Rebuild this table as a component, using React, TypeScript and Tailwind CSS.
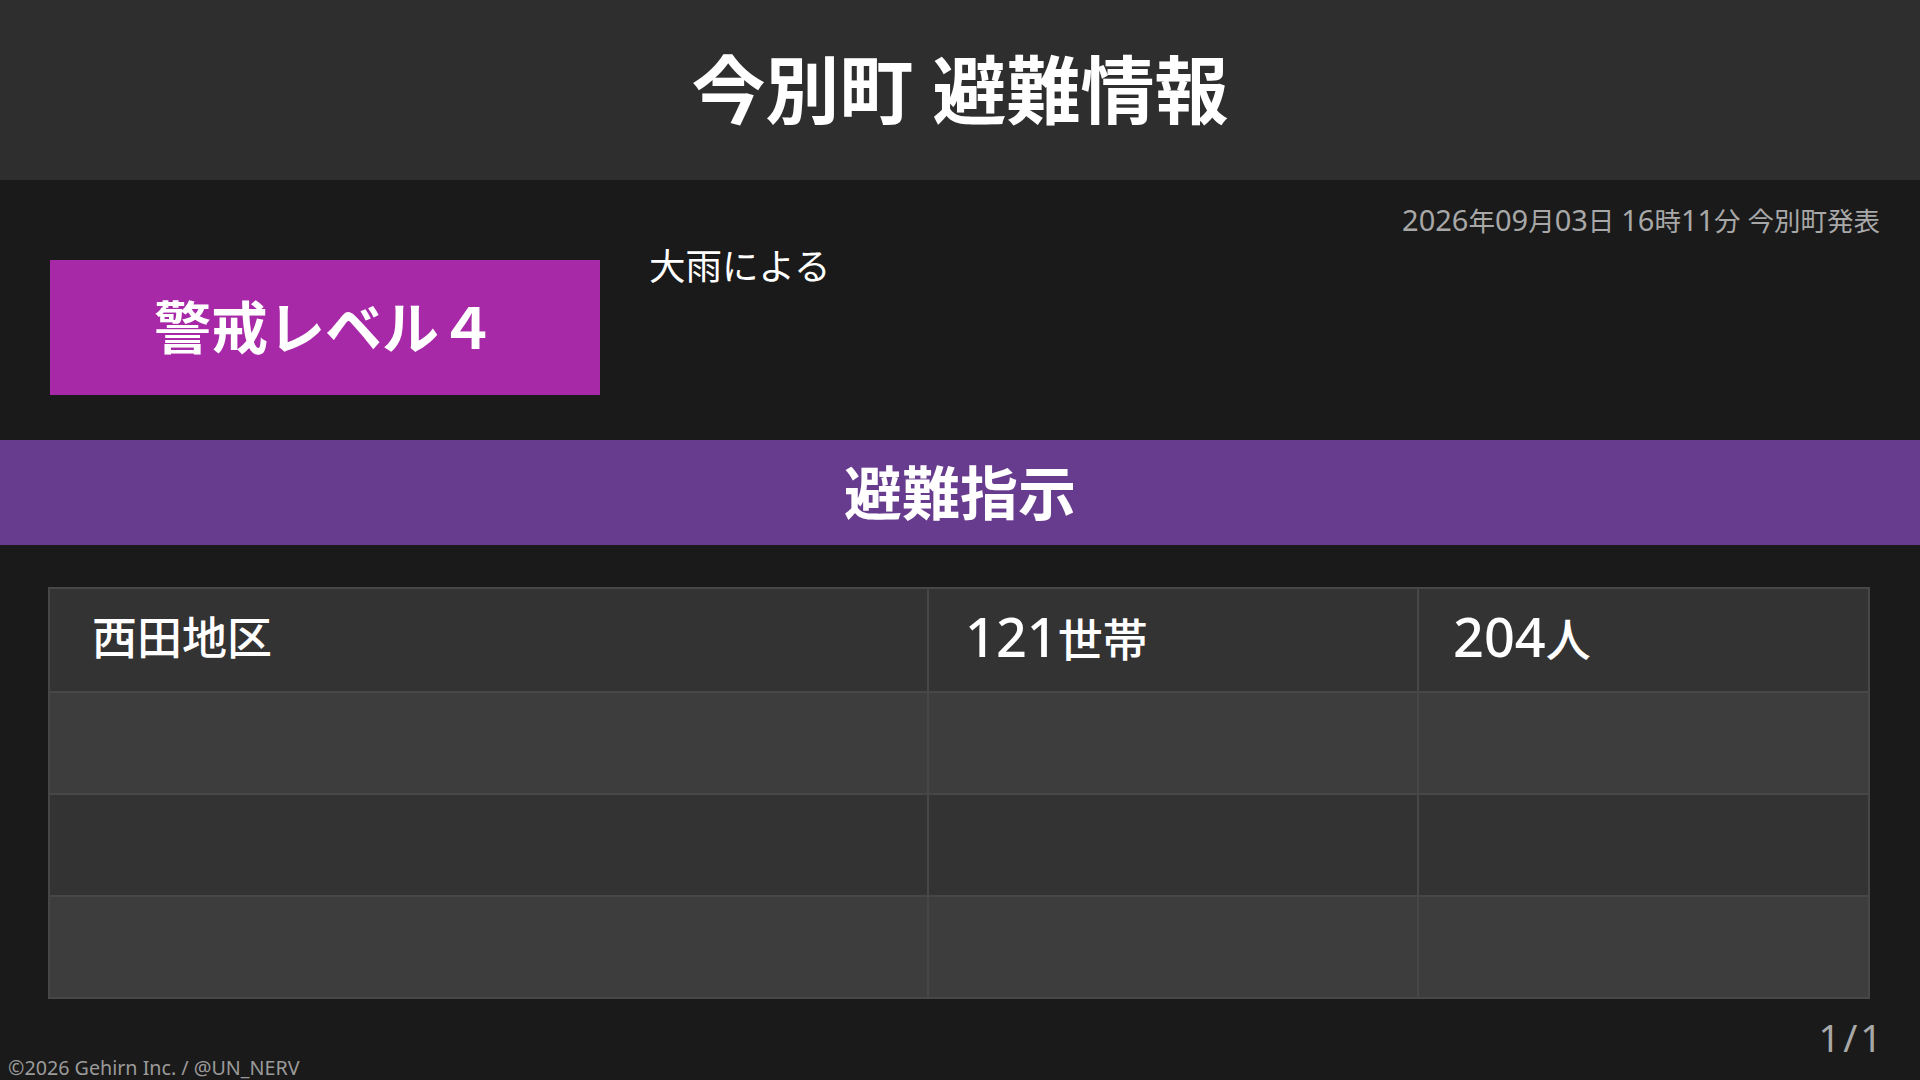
const rows = [
  { area: '西田地区', households: '121世帯', people: '204人' },
  { area: '', households: '', people: '' },
  { area: '', households: '', people: '' },
  { area: '', households: '', people: '' },
]

// digits in the reference come out a size larger than the kanji next to them
function Mixed({ text, digitClass }: { text: string; digitClass: string }) {
  const parts = text.split(/(\d+)/).filter(Boolean)
  return (
    <>
      {parts.map((p, i) =>
        /^\d+$/.test(p) ? (
          <span key={i} className={digitClass}>
            {p}
          </span>
        ) : (
          <span key={i}>{p}</span>
        )
      )}
    </>
  )
}

export default function App() {
  return (
    <div
      className="w-full h-[1080px] overflow-hidden bg-[#1a1a1a] text-white flex flex-col"
      style={{ fontFamily: '"Noto Sans", "Noto Sans CJK JP", sans-serif' }}
    >
      <header className="h-[180px] shrink-0 bg-[#2e2e2e] flex items-center justify-center">
        <h1 className="text-[74px] font-bold leading-none">今別町 避難情報</h1>
      </header>

      <section className="h-[260px] shrink-0 pt-[20px]">
        <div className="h-[40px] pr-[40px] text-right text-[26.5px] leading-[40px] text-[#a8a8a8]">
          <Mixed text="2026年09月03日 16時11分 今別町発表" digitClass="text-[29px]" />
        </div>
        <div className="flex items-start gap-[49px] pl-[50px]">
          <div className="mt-[20px] w-[550px] h-[135px] bg-[#a829a8] flex items-center justify-center">
            <span className="text-[57px] font-bold leading-none">警戒レベル４</span>
          </div>
          <p className="mt-[2px] text-[36.5px] leading-[49px]">大雨による</p>
        </div>
      </section>

      <div className="h-[105px] shrink-0 bg-[#673c8e] flex items-center justify-center">
        <h2 className="text-[58px] font-bold leading-none">避難指示</h2>
      </div>

      <div className="mt-[42px] ml-[48px] w-[1822px] border-2 border-[#474747]">
        {rows.map((row, i) => (
          <div
            key={i}
            className={`flex h-[102px] ${i > 0 ? 'border-t-2 border-[#474747]' : ''} ${
              i % 2 === 0 ? 'bg-[#333333]' : 'bg-[#3d3d3d]'
            }`}
          >
            <div className="w-[877px] flex items-center pl-[42px] pb-[5px] text-[45px] font-medium leading-none">
              {row.area}
            </div>
            <div className="w-[490px] border-l-2 border-[#474747] flex items-center pl-[36px] pb-[8px] text-[45px] font-medium leading-none">
              <span>
                <Mixed text={row.households} digitClass="text-[54px]" />
              </span>
            </div>
            <div className="flex-1 border-l-2 border-[#474747] flex items-center pl-[34px] pb-[8px] text-[45px] font-medium leading-none">
              <span>
                <Mixed text={row.people} digitClass="text-[54px]" />
              </span>
            </div>
          </div>
        ))}
      </div>

      <div className="mt-[19px] pr-[35px] text-right text-[38px] leading-none tracking-[3px] text-[#a8a8a8]">1/1</div>
      <div className="mt-[2px] pl-[8px] text-[19.7px] leading-none text-[#9a9a9a]">©2026 Gehirn Inc. / @UN_NERV</div>
    </div>
  )
}
